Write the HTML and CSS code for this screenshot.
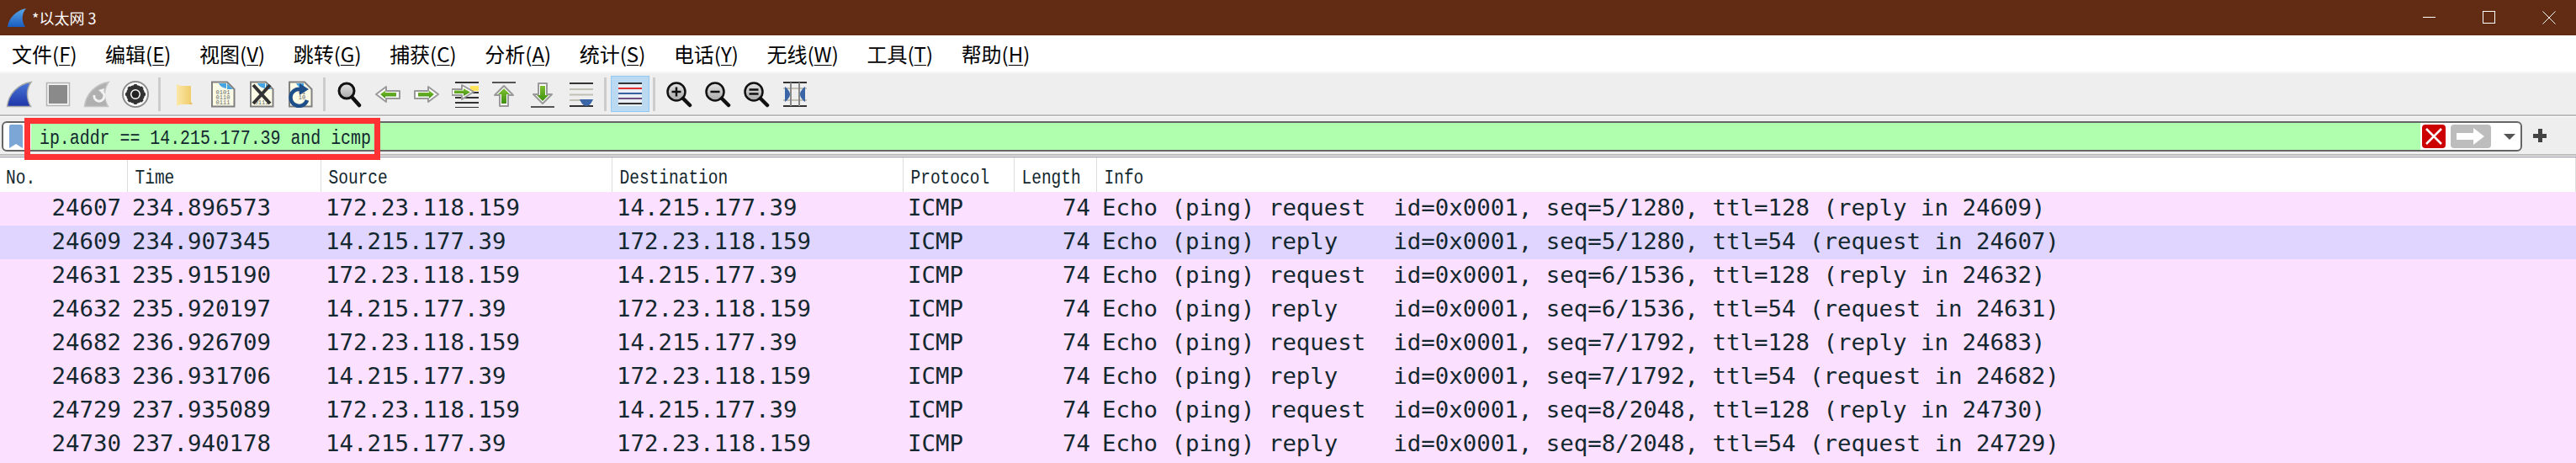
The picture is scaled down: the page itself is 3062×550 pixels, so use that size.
FILE: index.html
```html
<!DOCTYPE html>
<html lang="zh-CN">
<head>
    <meta charset="UTF-8">
    <title>*以太网 3</title>
    <link rel="stylesheet" href="styles.css">
</head>
<body>
    <svg class="defs" width="0" height="0">
        <defs>
            <linearGradient id="finBlue" x1="0" y1="0" x2="0" y2="1">
                <stop offset="0" stop-color="#4a78d8"/>
                <stop offset="1" stop-color="#1f35a8"/>
            </linearGradient>
            <linearGradient id="titleBlue" x1="0" y1="0" x2="0" y2="1">
                <stop offset="0" stop-color="#5aa8e8"/>
                <stop offset="1" stop-color="#1a5cc0"/>
            </linearGradient>
            <linearGradient id="arrowGreen" x1="0" y1="0" x2="0" y2="1">
                <stop offset="0" stop-color="#7fc030"/>
                <stop offset="1" stop-color="#3f8f10"/>
            </linearGradient>
            <linearGradient id="lensGrey" x1="0" y1="0" x2="0" y2="1">
                <stop offset="0" stop-color="#e4e4e4"/>
                <stop offset="1" stop-color="#a8a8a8"/>
            </linearGradient>
            <linearGradient id="folderYellow" x1="0" y1="0" x2="1" y2="0">
                <stop offset="0" stop-color="#fbe8a8"/>
                <stop offset="1" stop-color="#f0cc6c"/>
            </linearGradient>
        </defs>
    </svg>

    <!-- Barre de titre -->
    <header class="titlebar">
        <svg class="app-icon" width="24" height="24" viewBox="0 0 24 24">
            <path d="M1 23 C2 12 12 3 23 1 C18 7 17 15 22 23 Z" fill="url(#titleBlue)"/>
        </svg>
        <span class="title-text">*以太网 3</span>
        <div class="window-controls">
            <svg width="16" height="16" viewBox="0 0 16 16"><path d="M0 7.5H15" stroke="#fff" fill="none"/></svg>
            <svg width="16" height="16" viewBox="0 0 16 16"><rect x="0.5" y="0.5" width="14" height="14" stroke="#fff" fill="none"/></svg>
            <svg width="16" height="16" viewBox="0 0 16 16"><path d="M0.5 0.5L15.5 15.5M15.5 0.5L0.5 15.5" stroke="#fff" fill="none"/></svg>
        </div>
    </header>

    <!-- Menu -->
    <nav class="menubar">
        <span>文件(<u>F</u>)</span>
        <span>编辑(<u>E</u>)</span>
        <span>视图(<u>V</u>)</span>
        <span>跳转(<u>G</u>)</span>
        <span>捕获(<u>C</u>)</span>
        <span>分析(<u>A</u>)</span>
        <span>统计(<u>S</u>)</span>
        <span>电话(<u>Y</u>)</span>
        <span>无线(<u>W</u>)</span>
        <span>工具(<u>T</u>)</span>
        <span>帮助(<u>H</u>)</span>
    </nav>

    <!-- Barre d'outils -->
    <div class="toolbar">
        <div class="tool"><svg width="32" height="32" viewBox="0 0 32 32"><path d="M1.5 30.5 C3 16 14 4 30 1.5 C24 10 24 21 29.5 30.5 Z" fill="url(#finBlue)" stroke="#a8a8a8" stroke-width="1.5"/></svg></div>
        <div class="tool"><svg width="32" height="32" viewBox="0 0 32 32"><rect x="2.5" y="2.5" width="27" height="27" fill="#f4f4f4" stroke="#b4b4b4" stroke-width="1.5"/><rect x="5" y="5" width="22" height="22" fill="#8a8a8a"/></svg></div>
        <div class="tool"><svg width="32" height="32" viewBox="0 0 32 32"><path d="M1.5 30.5 C3 16 14 4 30 1.5 C24 10 24 21 29.5 30.5 Z" fill="#b0b0b0" stroke="#c4c4c4" stroke-width="1.5"/><path d="M13 17 A6 6 0 1 0 22 13" fill="none" stroke="#f2f2f2" stroke-width="3"/><path d="M18 11 L25 9 L24 16 Z" fill="#f2f2f2"/></svg></div>
        <div class="tool"><svg width="32" height="32" viewBox="0 0 32 32"><circle cx="16" cy="16" r="15" fill="#fff" stroke="#8c8c8c" stroke-width="2"/><circle cx="16" cy="16" r="8.5" fill="none" stroke="#333" stroke-width="5"/><path d="M16 4V28M4 16H28M7.5 7.5L24.5 24.5M24.5 7.5L7.5 24.5" stroke="#333" stroke-width="3.5" stroke-dasharray="3.5 17 3.5 0"/><circle cx="16" cy="16" r="4.5" fill="#222"/></svg></div>
        <i class="sep"></i>
        <div class="tool"><svg width="32" height="32" viewBox="0 0 32 32"><path d="M7 4 L12 6 H24 V28 H12 L7 30 Z" fill="url(#folderYellow)"/><path d="M24 25 L26 28 H22 Z" fill="#e8c060"/></svg></div>
        <div class="tool"><svg width="32" height="32" viewBox="0 0 32 32"><path d="M3 1.5 H21 L29.5 10 V30.5 H3 Z" fill="#fcfbe6" stroke="#808080" stroke-width="2"/><path d="M4 3 H11 Q13 8 20 9 V3 Z M21 3 L28 10 H21 Z" fill="#46a4e0"/><text class="bits" x="16" y="16">0101</text><text class="bits" x="16" y="22">0110</text><text class="bits" x="16" y="28">0111</text></svg></div>
        <div class="tool"><svg width="32" height="32" viewBox="0 0 32 32"><path d="M3 1.5 H21 L29.5 10 V30.5 H3 Z" fill="#fcfbe6" stroke="#808080" stroke-width="2"/><path d="M4 3 H11 Q13 8 20 9 V3 Z M21 3 L28 10 H21 Z" fill="#46a4e0"/><text class="bits" x="16" y="28">0111</text><path d="M6 5L26 27M26 5L6 27" stroke="#333" stroke-width="4"/></svg></div>
        <div class="tool"><svg width="32" height="32" viewBox="0 0 32 32"><path d="M3 1.5 H21 L29.5 10 V30.5 H3 Z" fill="#fcfbe6" stroke="#808080" stroke-width="2"/><path d="M4 3 H11 Q13 8 20 9 V3 Z" fill="#46a4e0"/><text class="bits" x="18" y="16">01</text><text class="bits" x="18" y="22">10</text><path d="M24 23 A10 10 0 1 1 16 10" fill="none" stroke="#1f4f88" stroke-width="4.5"/><path d="M15 3 L26 10 L15 17 Z" fill="#1f4f88"/></svg></div>
        <i class="sep"></i>
        <div class="tool"><svg width="32" height="32" viewBox="0 0 32 32"><circle cx="13" cy="12" r="9" fill="url(#lensGrey)" stroke="#111" stroke-width="3"/><path d="M19.5 19.5L28 29" stroke="#111" stroke-width="4.5" stroke-linecap="round"/></svg></div>
        <div class="tool"><svg width="32" height="32" viewBox="0 0 32 32"><path d="M2 16 L14 7 V12 H30 V21 H14 V25 Z" fill="#fff" stroke="#999" stroke-width="2" stroke-linejoin="round"/><path d="M7 16 L13 11.5 V14 H26 V18.5 H13 V21 Z" fill="url(#arrowGreen)"/></svg></div>
        <div class="tool"><svg width="32" height="32" viewBox="0 0 32 32"><path d="M30 16 L18 7 V12 H2 V21 H18 V25 Z" fill="#fff" stroke="#999" stroke-width="2" stroke-linejoin="round"/><path d="M25 16 L19 11.5 V14 H6 V18.5 H19 V21 Z" fill="url(#arrowGreen)"/></svg></div>
        <div class="tool"><svg width="32" height="32" viewBox="0 0 32 32"><path d="M4 3H32M4 27H32M4 33H32" transform="translate(0,-1)" stroke="#333" stroke-width="2"/><rect x="22" y="6" width="10" height="6" fill="#ffe45c"/><path d="M4 14H32M4 20H32" stroke="#333" stroke-width="2"/><path d="M0 16 L0 10 H12 V5 L26 13 L12 22 V17 H0 Z" fill="#fff" stroke="#999" stroke-width="2" stroke-linejoin="round"/><path d="M3 11.5 H14 V9 L22 13.5 L14 18 V15 H3 Z" fill="url(#arrowGreen)"/></svg></div>
        <div class="tool"><svg width="32" height="32" viewBox="0 0 32 32"><path d="M2 2H30" stroke="#555" stroke-width="2"/><path d="M16 6 L27 17 H21 V30 H11 V17 H5 Z" fill="#fff" stroke="#999" stroke-width="2" stroke-linejoin="round"/><path d="M16 9 L23 16 H19 V27 H13 V16 H9 Z" fill="url(#arrowGreen)"/></svg></div>
        <div class="tool"><svg width="32" height="32" viewBox="0 0 32 32"><path d="M2 31H30" stroke="#555" stroke-width="2"/><path d="M16 27 L27 16 H21 V3 H11 V16 H5 Z" fill="#fff" stroke="#999" stroke-width="2" stroke-linejoin="round"/><path d="M16 24 L23 17 H19 V6 H13 V17 H9 Z" fill="url(#arrowGreen)"/></svg></div>
        <div class="tool"><svg width="32" height="32" viewBox="0 0 32 32"><path d="M2 3H30M2 30H30" stroke="#333" stroke-width="2"/><path d="M2 10H30M2 16.5H30M2 23H16" stroke="#c0c0b4" stroke-width="2"/><path d="M14 22H30 C28 27 25 30 22 30 C19 30 16 27 14 22Z" fill="#3a66a8"/></svg></div>
        <i class="sep"></i>
        <div class="tool tool-on"><svg width="32" height="32" viewBox="0 0 32 32"><rect x="2" y="2" width="28" height="28" fill="#e8eef4"/><path d="M2 3H30M2 27H30" stroke="#333" stroke-width="2"/><path d="M2 9H30" stroke="#e03030" stroke-width="2"/><path d="M2 15H30" stroke="#3a5fa0" stroke-width="2"/><path d="M2 21H30" stroke="#704f80" stroke-width="2"/></svg></div>
        <i class="sep"></i>
        <div class="tool"><svg width="32" height="32" viewBox="0 0 32 32"><circle cx="13" cy="13" r="10.5" fill="url(#lensGrey)" stroke="#111" stroke-width="2.5"/><path d="M21 21L29 29" stroke="#111" stroke-width="4.5" stroke-linecap="round"/><path d="M7.5 13H18.5M13 7.5V18.5" stroke="#111" stroke-width="2.5"/></svg></div>
        <div class="tool"><svg width="32" height="32" viewBox="0 0 32 32"><circle cx="13" cy="13" r="10.5" fill="url(#lensGrey)" stroke="#111" stroke-width="2.5"/><path d="M21 21L29 29" stroke="#111" stroke-width="4.5" stroke-linecap="round"/><path d="M7.5 13H18.5" stroke="#111" stroke-width="2.5"/></svg></div>
        <div class="tool"><svg width="32" height="32" viewBox="0 0 32 32"><circle cx="13" cy="13" r="10.5" fill="url(#lensGrey)" stroke="#111" stroke-width="2.5"/><path d="M21 21L29 29" stroke="#111" stroke-width="4.5" stroke-linecap="round"/><path d="M7.5 10.5H18.5M7.5 15.5H18.5" stroke="#111" stroke-width="2.5"/></svg></div>
        <div class="tool"><svg width="32" height="32" viewBox="0 0 32 32"><path d="M2 2H30M2 30H30" stroke="#333" stroke-width="2"/><path d="M2 9H30M2 23H30" stroke="#c0c0b4" stroke-width="2"/><path d="M11 2V30M21 2V30" stroke="#888" stroke-width="2"/><path d="M4 7 C7 9 10 13 10 16 C10 19 7 23 4 25Z M28 7 C25 9 22 13 22 16 C22 19 25 23 28 25Z" fill="#3a66a8"/></svg></div>
    </div>

    <!-- Filtre -->
    <div class="filterbar">
        <div class="filter-box">
            <svg class="bookmark" width="16" height="28" viewBox="0 0 16 28"><path d="M0 2 Q0 0 2 0 H14 Q16 0 16 2 V28 L8 23 L0 28 Z" fill="#7ba6d6"/></svg>
            <div class="filter-input"><span class="filter-text">ip.addr == 14.215.177.39 and icmp</span></div>
            <div class="filter-clear"><svg width="28" height="28" viewBox="0 0 28 28"><rect width="28" height="28" rx="4" fill="#cc0000"/><path d="M5 5L23 23M23 5L5 23" stroke="#fff" stroke-width="2.5"/></svg></div>
            <div class="filter-apply"><svg width="34" height="20" viewBox="0 0 34 20"><path d="M0 6H20V0L33 10L20 20V14H0Z" fill="#fff"/></svg></div>
            <div class="filter-drop"></div>
        </div>
        <div class="filter-add"></div>
    </div>
    <div class="list-rule"></div>
    <div class="annotation"></div>

    <!-- Liste des paquets -->
    <table class="packets">
        <colgroup>
            <col class="col-no">
            <col class="col-time">
            <col class="col-addr">
            <col class="col-addr">
            <col class="col-proto">
            <col class="col-len">
            <col>
        </colgroup>
        <thead>
            <tr>
                <th><span>No.</span></th>
                <th><span>Time</span></th>
                <th><span>Source</span></th>
                <th><span>Destination</span></th>
                <th><span>Protocol</span></th>
                <th><span>Length</span></th>
                <th><span>Info</span></th>
            </tr>
        </thead>
        <tbody>
            <tr><td class="num">24607</td><td>234.896573</td><td>172.23.118.159</td><td>14.215.177.39</td><td>ICMP</td><td class="num">74</td><td class="info">Echo (ping) request  id=0x0001, seq=5/1280, ttl=128 (reply in 24609)</td></tr>
            <tr class="related"><td class="num">24609</td><td>234.907345</td><td>14.215.177.39</td><td>172.23.118.159</td><td>ICMP</td><td class="num">74</td><td class="info">Echo (ping) reply    id=0x0001, seq=5/1280, ttl=54 (request in 24607)</td></tr>
            <tr><td class="num">24631</td><td>235.915190</td><td>172.23.118.159</td><td>14.215.177.39</td><td>ICMP</td><td class="num">74</td><td class="info">Echo (ping) request  id=0x0001, seq=6/1536, ttl=128 (reply in 24632)</td></tr>
            <tr><td class="num">24632</td><td>235.920197</td><td>14.215.177.39</td><td>172.23.118.159</td><td>ICMP</td><td class="num">74</td><td class="info">Echo (ping) reply    id=0x0001, seq=6/1536, ttl=54 (request in 24631)</td></tr>
            <tr><td class="num">24682</td><td>236.926709</td><td>172.23.118.159</td><td>14.215.177.39</td><td>ICMP</td><td class="num">74</td><td class="info">Echo (ping) request  id=0x0001, seq=7/1792, ttl=128 (reply in 24683)</td></tr>
            <tr><td class="num">24683</td><td>236.931706</td><td>14.215.177.39</td><td>172.23.118.159</td><td>ICMP</td><td class="num">74</td><td class="info">Echo (ping) reply    id=0x0001, seq=7/1792, ttl=54 (request in 24682)</td></tr>
            <tr><td class="num">24729</td><td>237.935089</td><td>172.23.118.159</td><td>14.215.177.39</td><td>ICMP</td><td class="num">74</td><td class="info">Echo (ping) request  id=0x0001, seq=8/2048, ttl=128 (reply in 24730)</td></tr>
            <tr><td class="num">24730</td><td>237.940178</td><td>14.215.177.39</td><td>172.23.118.159</td><td>ICMP</td><td class="num">74</td><td class="info">Echo (ping) reply    id=0x0001, seq=8/2048, ttl=54 (request in 24729)</td></tr>
        </tbody>
    </table>
</body>
</html>
```

FILE: styles.css
```css
/* Styles généraux */
body {
    margin: 0;
    width: 3062px;
    height: 550px;
    overflow: hidden;
    background-color: #fce0ff;
    font-family: "Noto Sans CJK SC", "Noto Sans", sans-serif;
    position: relative;
}

.defs {
    display: block;
    height: 0;
}

/* Barre de titre */
.titlebar {
    height: 42px;
    background-color: #622b14;
    color: #fff;
    display: flex;
    align-items: center;
    padding-left: 8px;
}

.app-icon {
    margin-right: 6px;
}

.title-text {
    font-size: 18px;
}

.window-controls {
    margin-left: auto;
    display: flex;
    gap: 55px;
    padding-right: 24px;
}

/* Menu */
.menubar {
    height: 43px;
    background-color: #fff;
    display: flex;
    align-items: center;
    gap: 33.6px;
    padding-left: 14px;
    font-size: 24px;
    color: #000;
}

.menubar u {
    text-underline-offset: 3px;
    text-decoration-thickness: 1px;
}

/* Barre d'outils */
.toolbar {
    height: 49px;
    background-color: #eeeeee;
    border-top: 2px solid #f6f6f6;
    border-bottom: 2px solid #bdbdbd;
    display: flex;
    align-items: center;
    box-sizing: content-box;
}

.tool {
    width: 46px;
    height: 43px;
    display: flex;
    align-items: center;
    justify-content: center;
    box-sizing: border-box;
}

.tool-on {
    background-color: #bcd9f2;
    border: 1px solid #90c8f6;
}

.sep {
    width: 3px;
    height: 40px;
    margin: 0 5px 0 4px;
    background-color: #cccccc;
}

.bits {
    font-family: "Liberation Mono", monospace;
    font-size: 7px;
    fill: #666;
    text-anchor: middle;
}

/* Filtre */
.filterbar {
    height: 47px;
    background-color: #eeeeee;
    border-top: 1px solid #fff;
    border-bottom: 2px solid #bdbdbd;
    display: flex;
    align-items: flex-start;
    padding: 5px 0 0 2px;
    box-sizing: border-box;
}

.list-rule {
    height: 2px;
    box-sizing: border-box;
    background-color: #fff;
    border-bottom: 1px solid #8a8a9a;
}

.filter-box {
    width: 2996px;
    height: 36px;
    background-color: #fff;
    border: 2px solid #666666;
    border-radius: 6px;
    box-sizing: border-box;
    display: flex;
    align-items: center;
    padding-left: 7px;
}

.bookmark {
    flex: none;
    margin-right: 10px;
}

.filter-input {
    flex: 1;
    height: 100%;
    box-sizing: border-box;
    background-color: #afffaf;
    display: flex;
    align-items: center;
    padding: 4px 0 0 10px;
}

.filter-text {
    display: inline-block;
    font-family: "Liberation Mono", monospace;
    font-size: 19.9px;
    color: #12272e;
    transform: scaleY(1.2);
    white-space: pre;
}

.filter-clear {
    margin-left: 2px;
    height: 28px;
}

.filter-apply {
    width: 48px;
    height: 28px;
    margin-left: 6px;
    background-color: #bdbdbd;
    border-radius: 4px;
    display: flex;
    align-items: center;
    justify-content: center;
}

.filter-drop {
    width: 0;
    height: 0;
    margin: 0 6px 0 15px;
    border-left: 7px solid transparent;
    border-right: 7px solid transparent;
    border-top: 7px solid #555;
}

.filter-add {
    width: 16px;
    height: 16px;
    margin: 9px 0 0 13px;
    background:
        linear-gradient(#444, #444) center / 16px 5px no-repeat,
        linear-gradient(#444, #444) center / 5px 16px no-repeat;
}

/* Cadre rouge posé sur la capture */
.annotation {
    position: absolute;
    left: 29px;
    top: 140px;
    width: 423px;
    height: 50px;
    border: 7px solid #ff3333;
    box-sizing: border-box;
}

/* Liste des paquets */
.packets {
    width: 100%;
    border-collapse: collapse;
    table-layout: fixed;
    font-family: "DejaVu Sans Mono", monospace;
    color: #12272e;
}

.col-no { width: 151px; }
.col-time { width: 230px; }
.col-addr { width: 346px; }
.col-proto { width: 132px; }
.col-len { width: 98px; }

.packets thead tr {
    height: 41px;
    background-color: #fff;
}

.packets th {
    padding: 8px 0 0 9px;
    border-right: 1px solid #dddddd;
    text-align: left;
    font-weight: normal;
    font-family: "Liberation Mono", monospace;
    font-size: 19.5px;
    color: #12272e;
}

.packets th:first-child {
    padding-left: 7px;
}

.packets th span {
    display: inline-block;
    transform: scaleY(1.2);
}

.packets tbody tr {
    height: 40px;
    background-color: #fce0ff;
}

.packets tbody tr.related {
    background-color: #e0d5ff;
}

.packets td {
    padding: 0 0 3px 6px;
    font-size: 27.4px;
    line-height: 37px;
    white-space: pre;
    overflow: visible;
}

.packets td.info {
    padding-left: 7px;
}

.packets td.num {
    text-align: right;
    padding: 0 7px 3px 0;
}
```
